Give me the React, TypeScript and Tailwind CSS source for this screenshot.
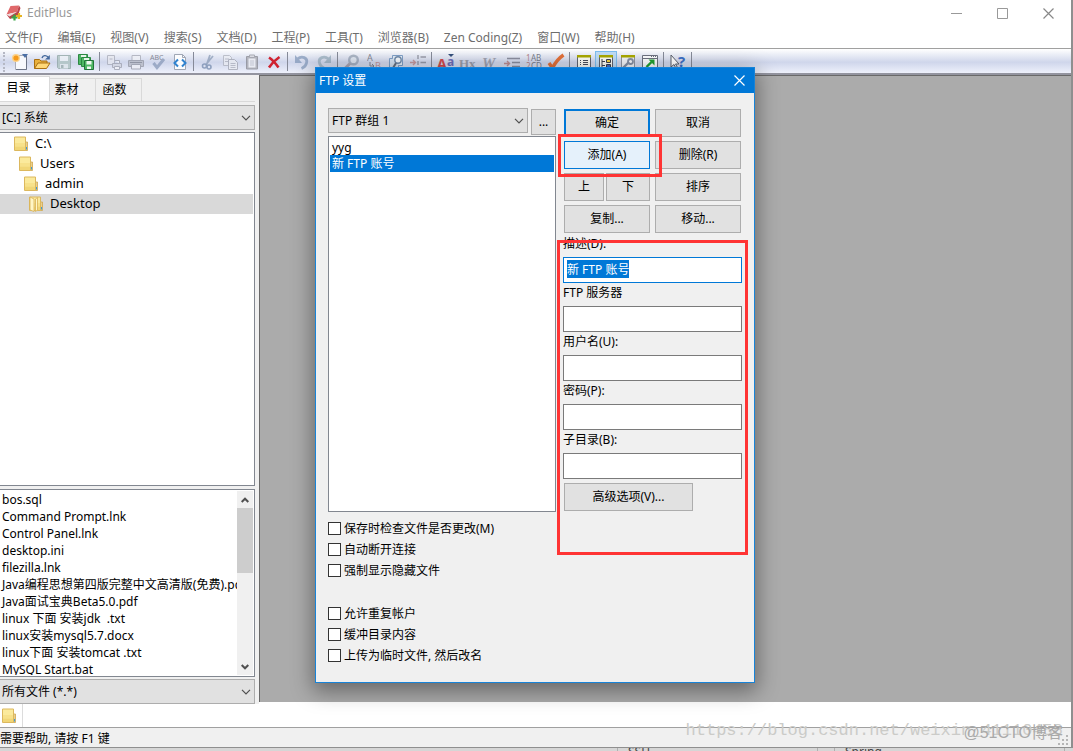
import { useEffect, useRef, useState } from 'react';
import type { ReactNode } from 'react';

const menus = [
  '文件(F)',
  '编辑(E)',
  '视图(V)',
  '搜索(S)',
  '文档(D)',
  '工程(P)',
  '工具(T)',
  '浏览器(B)',
  'Zen Coding(Z)',
  '窗口(W)',
  '帮助(H)',
];

type Tool = {
  name: string;
  icon: ReactNode;
  active?: boolean;
  dim?: boolean;
};

const toolGroups: Tool[][] = [
  [
    {
      name: '新建',
      icon: (
        <>
          <path d="M3.5 1.5h11v14h-11z" fill="#f7f8fc" stroke="#a9adb8" />
          <path d="M14.5 2v13.5H4" fill="none" stroke="#6d7486" />
          <path d="M10 0h6l-3 4z" fill="#4b6fa5" />
          <circle cx="4" cy="4" r="4" fill="#fbd28a" />
          <circle cx="4" cy="4" r="2.6" fill="#f59a1b" />
        </>
      ),
    },
    {
      name: '打开',
      icon: (
        <>
          <path d="M.5 14.500V5.500h5l1.500 1.500h6v3" fill="#e9b13d" stroke="#a96f12" />
          <path d="M.5 14.500 4 9h12l-3.500 5.500z" fill="#ffd877" stroke="#a96f12" />
          <path d="M8 4c1-3 4-3 6-1" fill="none" stroke="#44699c" strokeWidth="1.400" />
          <path d="M15.800 1v4.500H11z" fill="#44699c" />
        </>
      ),
    },
    {
      name: '保存',
      dim: true,
      icon: (
        <>
          <path d="M1.500 1.500h13v13h-12l-1-1z" fill="#a9c0bc" stroke="#869e9b" />
          <path d="M4 2h8v5H4z" fill="#eef2f6" />
          <path d="M4 10h8v4.500H4z" fill="#dfe7ea" />
          <path d="M5 11h2.500v3H5z" fill="#8fa3a3" />
        </>
      ),
    },
    {
      name: '全部保存',
      icon: (
        <>
          <path d="M.5.5h9v10h-9z" fill="#4fb864" stroke="#2c8843" />
          <path d="M3 1h5v3H3z" fill="#e6f5e9" />
          <path d="M3.500 3.500h9v9h-9z" fill="#4fb864" stroke="#2c8843" />
          <path d="M6 4h5v3H6z" fill="#e6f5e9" />
          <path d="M6.500 6.500h9v9h-9z" fill="#4fb864" stroke="#22753a" />
          <path d="M8.500 7h5v3.500h-5zM9 12.500h4V15H9z" fill="#f0f8f1" />
        </>
      ),
    },
  ],
  [
    {
      name: '打印预览',
      dim: true,
      icon: (
        <>
          <path d="M1.500 1.500h7v9h-7z" fill="#e8e9ef" stroke="#a3a6b3" />
          <path d="M3.500 5h3" stroke="#a3a6b3" />
          <path d="M6.500 9.500h9v4h-9z" fill="#d2d5df" stroke="#979aa8" />
          <path d="M8.500 6.500h5v3M8.500 12.500h5v3h-5z" fill="#f3f4f8" stroke="#979aa8" />
        </>
      ),
    },
    {
      name: '打印',
      dim: true,
      icon: (
        <>
          <path d="M4 1.500h8.500v5H4z" fill="#f1f2f6" stroke="#a0a3ae" />
          <path d="M.5 6.500h15v6H.5z" fill="#b3b6c0" stroke="#8d909c" />
          <path d="M2 8.500h12" stroke="#787c88" />
          <path d="M3.500 10.500h9v4.500h-9z" fill="#f1f2f6" stroke="#8d909c" />
        </>
      ),
    },
    {
      name: '拼写检查',
      dim: true,
      icon: (
        <>
          <text x="0" y="6" fontSize="7" fill="#5e626f">
            ABC
          </text>
          <path d="m3.500 9 3.500 4.500L14 5" fill="none" stroke="#8496b6" strokeWidth="3" />
        </>
      ),
    },
    {
      name: '在浏览器中查看',
      icon: (
        <>
          <path d="M2.500.5h8l3 3v12h-11z" fill="#fbfcfe" stroke="#9fa6b4" />
          <path d="M10.500.5v3h3" fill="none" stroke="#9fa6b4" />
          <path d="M6 5.500 2.500 9 6 12.500M10 5.500 13.500 9 10 12.500" fill="none" stroke="#2f82cf" strokeWidth="2" />
        </>
      ),
    },
  ],
  [
    {
      name: '剪切',
      dim: true,
      icon: (
        <>
          <path d="M10 1 6.500 11M13 2 6 10.500" stroke="#8698b3" strokeWidth="1.800" />
          <circle cx="4.500" cy="12" r="2" fill="none" stroke="#6f86aa" strokeWidth="1.600" />
          <circle cx="9" cy="13" r="2" fill="none" stroke="#6f86aa" strokeWidth="1.600" />
        </>
      ),
    },
    {
      name: '复制',
      dim: true,
      icon: (
        <>
          <path d="M1.500 1.500h6l2 2v8h-8z" fill="#eceef3" stroke="#abaeb9" />
          <path d="M6.500 5.500h6l3 3v7h-9z" fill="#eceef3" stroke="#9da0ac" />
          <path d="M3 5h4M3 7.500h3M8.500 9.500h5M8.500 11.500h5M8.500 13.500h5" stroke="#abaeb9" />
        </>
      ),
    },
    {
      name: '粘贴',
      dim: true,
      icon: (
        <>
          <path d="M2.500 2.500h11v12.500h-11z" fill="#a3a3a9" stroke="#7f8088" />
          <path d="M4.500 4.500h7v9h-7z" fill="#eff0f4" />
          <path d="M5.500 1h5v2.500h-5z" fill="#d5d6dc" stroke="#8f9098" />
          <path d="M6 7h4M6 9h4M6 11h4" stroke="#babcc5" />
        </>
      ),
    },
    {
      name: '删除',
      icon: <path d="M3 3.500c3 2 6 5 9.500 10M13.500 3C9 6 6 9 3 13.500" fill="none" stroke="#cf2230" strokeWidth="2.600" />,
    },
  ],
  [
    {
      name: '撤消',
      dim: true,
      icon: (
        <>
          <path d="M3.500 5C8 1 14 4 12.500 9c-.5 2.500-2.500 4.500-5 5.500" fill="none" stroke="#7f96b8" strokeWidth="2.800" />
          <path d="M1 1v8h7z" fill="#7f96b8" />
        </>
      ),
    },
    {
      name: '重做',
      dim: true,
      icon: (
        <>
          <path d="M12.500 5C8 1 2 4 3.500 9c.5 2.500 2.500 4.500 5 5.500" fill="none" stroke="#94abbb" strokeWidth="2.800" />
          <path d="M15 1v8H8z" fill="#94abbb" />
        </>
      ),
    },
  ],
  [
    {
      name: '查找',
      dim: true,
      icon: (
        <>
          <circle cx="9.500" cy="6" r="4.300" fill="#dfe7f0" stroke="#93a0b2" strokeWidth="2.400" />
          <path d="m6 9.500-5 5" stroke="#9a8f9b" strokeWidth="3" />
        </>
      ),
    },
    {
      name: '替换',
      dim: true,
      icon: (
        <>
          <text x="1" y="7" fontSize="9" fill="#5c5f6c">
            A
          </text>
          <path d="M4 8v4h4M6 10l2 2-2 2" fill="none" stroke="#5c5f6c" />
          <text x="9" y="15" fontSize="9" fill="#b57575">
            B
          </text>
        </>
      ),
    },
    {
      name: '在文件中查找',
      icon: (
        <>
          <path d="M1.500 4.500h9v10h-9z" fill="#d2e0f0" stroke="#7f9fc6" />
          <path d="M4.500 4V1.500h10v10H11" fill="#e4edf7" stroke="#7f9fc6" />
          <circle cx="10" cy="6" r="3.200" fill="#f4f8fc" stroke="#6f8aaa" strokeWidth="1.400" />
          <path d="m8 9-3 5" stroke="#66707f" strokeWidth="2" />
        </>
      ),
    },
    {
      name: '转到行',
      dim: true,
      icon: (
        <>
          <path d="M0 8.500h5M3 6l2.500 2.500L3 11" fill="none" stroke="#bb7c7c" strokeWidth="1.400" />
          <path d="M8 1v4M8 7v4M8 13v3M10.500 3H16M10.500 8.500H16M10.500 14H16" stroke="#7b7e8b" strokeWidth="1.400" />
        </>
      ),
    },
  ],
  [
    {
      name: '字体',
      icon: (
        <>
          <text x="-1" y="15" fontSize="14" fontWeight="bold" fill="#cf4b4f">
            A
          </text>
          <text x="9" y="12" fontSize="12" fontWeight="bold" fill="#6c6cb8">
            a
          </text>
          <path d="M10 0h6l-3 3z" fill="#34507c" />
        </>
      ),
    },
    {
      name: '十六进制查看器',
      dim: true,
      icon: (
        <text x="-1" y="14" fontSize="13" fontWeight="bold" fontFamily="Liberation Serif, serif" fill="#80838f">
          Hx
        </text>
      ),
    },
    {
      name: '自动换行',
      dim: true,
      icon: (
        <text
          x="0"
          y="14"
          fontSize="15"
          fontWeight="bold"
          fontStyle="italic"
          fontFamily="Liberation Serif, serif"
          fill="#858896"
        >
          W
        </text>
      ),
    },
    {
      name: '自动缩进',
      dim: true,
      icon: (
        <>
          <path d="M3 4.500h13M8 8.500h8M8 12.500h8" stroke="#696d7e" strokeWidth="1.400" />
          <path d="M0 9.500h5M3 7l2.500 2.500L3 12" fill="none" stroke="#b06a6a" strokeWidth="1.400" />
        </>
      ),
    },
    {
      name: '行号',
      dim: true,
      icon: (
        <>
          <text x="0" y="7" fontSize="8" fill="#a25c5c">
            1
          </text>
          <text x="5" y="7" fontSize="8" fill="#4f5362">
            AB
          </text>
          <text x="0" y="15" fontSize="8" fill="#a25c5c">
            2
          </text>
          <text x="5" y="15" fontSize="8" fill="#4f5362">
            CD
          </text>
        </>
      ),
    },
    {
      name: '语法检查',
      icon: <path d="m1 9 3.500 5C7 9 11 4 15.500 1" fill="none" stroke="#e2703a" strokeWidth="3.400" />,
    },
  ],
  [
    {
      name: '剪辑窗口',
      icon: (
        <>
          <path d="M1.500 1.500h13v13h-13z" fill="#fbfbf4" stroke="#5f6472" />
          <path d="M1 1h14v2.500H1z" fill="#a9a800" />
          <path d="M4 6.500h1M4 8.500h1M4 10.500h1M7 6.500h5M7 8.500h5M7 10.500h5" stroke="#4a4f5c" />
        </>
      ),
    },
    {
      name: '目录窗口',
      active: true,
      icon: (
        <>
          <path d="M1.500 1.500h13v13h-13z" fill="#fbfbf4" stroke="#5f6472" />
          <path d="M1 1h14v2.500H1z" fill="#a9a800" />
          <path d="M4 5v8M4 7.500h3M4 11.500h3" fill="none" stroke="#3c414d" />
          <path d="M8.500 5.500h4v3h-4z" fill="#f1d13e" stroke="#3c414d" />
          <path d="M8.500 10.500h4v3h-4z" fill="#3f6ec6" stroke="#3c414d" />
        </>
      ),
    },
    {
      name: '输出窗口',
      icon: (
        <>
          <path d="M1.500 1.500h13v13h-13z" fill="#f1f3f8" stroke="#8f94a2" />
          <path d="M1 1h14v2.500H1z" fill="#a9a800" />
          <path d="m3 14 6-6" stroke="#8690a5" strokeWidth="2.400" />
          <circle cx="10.500" cy="7.500" r="2.500" fill="none" stroke="#8690a5" strokeWidth="1.800" />
        </>
      ),
    },
    {
      name: '新窗口',
      icon: (
        <>
          <path d="M.5 1.500h15v13H.5z" fill="#fbfcfe" stroke="#6d7280" />
          <path d="M1 4.500h14M9 2.500h1M11 2.500h1M13 2.500h1" stroke="#6d7280" />
          <path d="m4.500 13 5-5" stroke="#22a032" strokeWidth="2.400" />
          <path d="M6.500 5.500h6v6z" fill="#22a032" />
        </>
      ),
    },
  ],
  [
    {
      name: '上下文帮助',
      icon: (
        <>
          <path d="M1 1v12l3-2.500 2 4 1.500-1-2-3.500H9z" fill="#fff" stroke="#5b606d" />
          <text x="8" y="13" fontSize="15" fontWeight="bold" fill="#3d6fc4">
            ?
          </text>
        </>
      ),
    },
  ],
];

const folders = [
  { name: 'C:\\', indent: 'pl-[14px]' },
  { name: 'Users', indent: 'pl-[19px]' },
  { name: 'admin', indent: 'pl-[24px]' },
  { name: 'Desktop', indent: 'pl-[29px]' },
];

const files = [
  'bos.sql',
  'Command Prompt.lnk',
  'Control Panel.lnk',
  'desktop.ini',
  'filezilla.lnk',
  'Java编程思想第四版完整中文高清版(免费).pdf',
  'Java面试宝典Beta5.0.pdf',
  'linux 下面 安装jdk  .txt',
  'linux安装mysql5.7.docx',
  'linux下面 安装tomcat .txt',
  'MySQL Start.bat',
];

const saveOptions = ['保存时检查文件是否更改(M)', '自动断开连接', '强制显示隐藏文件'];
const cacheOptions = ['允许重复帐户', '缓冲目录内容', '上传为临时文件, 然后改名'];

function Chevron() {
  return (
    <svg viewBox="0 0 10 6" className="h-[6px] w-[10px]" aria-hidden>
      <path d="m1 .8 4 4 4-4" fill="none" stroke="#505050" strokeWidth="1.200" />
    </svg>
  );
}

function ScrollArrow({ up = false }: { up?: boolean }) {
  return (
    <svg viewBox="0 0 8 6" className={up ? 'h-[6px] w-2' : 'h-[6px] w-2 rotate-180'} aria-hidden>
      <path d="m.7 5 3.300-3.300L7.300 5" fill="none" stroke="#505050" strokeWidth="2" />
    </svg>
  );
}

function FolderIcon({ open = false }: { open?: boolean }) {
  return (
    <svg viewBox="0 0 16 16" className="h-4 w-4 shrink-0" aria-hidden>
      <path d="M10.500 6h3v8.500h-3z" fill="#ecd08a" stroke="#cda654" strokeWidth=".8" />
      <path d="M.5 1h11v13.500H.5z" fill="#fbea9c" stroke="#dcb85e" />
      <path d="M1 7h10v3.500H1z" fill="#f7e18a" />
      <path d="M1 10.500h10V14H1z" fill="#f1d676" />
      <path d="M12.500 11v2.500" stroke="#3d9bd8" />
      {open && <path d="m1 1 4 2v12.500l-4-1.500zM6.500 3l2-1.500V14l-2 1.500z" fill="#fff6c6" stroke="#d9b355" strokeWidth=".8" />}
    </svg>
  );
}

function AppIcon() {
  return (
    <svg viewBox="0 0 16 16" className="h-4 w-4" aria-hidden>
      <path d="M4.500 1 13 .5 11 7 .5 9.500z" fill="#e0686a" />
      <path d="M.5 9.500 11 7v2.500L3 12.500z" fill="#f0dcdc" />
      <path d="M13 .5 14.500 3 12 10.500 4 14 .5 9.500l3 2L11 7z" fill="#b9434a" />
      <path d="M8.500 9.500v6M5.500 12.500h6" stroke="#3aa648" strokeWidth="2.200" />
      <path d="M13 8v6M10 11h6" stroke="#e6b422" strokeWidth="2.200" />
    </svg>
  );
}

type ComboProps = {
  label: string;
  value: string;
  flush?: boolean;
};

function Combo({ label, value, flush = false }: ComboProps) {
  return (
    <div className="relative h-[25px]">
      <select
        aria-label={label}
        className={
          flush
            ? 'h-full w-full appearance-none border border-l-0 border-[#adadad] bg-[#e1e1e1] pl-[2px] pr-6 text-xs outline-none'
            : 'h-full w-full appearance-none border border-[#adadad] bg-[#e1e1e1] pl-[3px] pr-6 text-xs outline-none'
        }
      >
        <option>{value}</option>
      </select>
      <span className="pointer-events-none absolute inset-y-0 right-1 flex items-center">
        <Chevron />
      </span>
    </div>
  );
}

type DialogButtonProps = {
  children: ReactNode;
  className?: string;
};

function DialogButton({ children, className = 'border border-[#adadad] bg-[#e1e1e1]' }: DialogButtonProps) {
  return (
    <button type="button" className={`h-7 w-full text-xs ${className}`}>
      {children}
    </button>
  );
}

function Field({ id, label, children }: { id: string; label: string; children?: ReactNode }) {
  return (
    <div>
      <label htmlFor={id} className="mb-[3px] block h-5 leading-5">
        {label}
      </label>
      {children ?? <input id={id} className="block h-[26px] w-full border border-[#7a7a7a] bg-white px-[3px] outline-none" />}
    </div>
  );
}

function CheckRow({ label }: { label: string }) {
  return (
    <label className="flex h-[21px] items-center gap-[3px]">
      <input type="checkbox" className="h-[13px] w-[13px] shrink-0 appearance-none border border-[#333] bg-white checked:bg-[#0078d7]" />
      {label}
    </label>
  );
}

function TitleBar() {
  return (
    <header className="flex h-[26px] items-center bg-white pl-1.5 text-[#999]">
      <AppIcon />
      <h1 className="ml-[5px] flex-1 text-xs">EditPlus</h1>
      <button type="button" aria-label="最小化" className="flex h-full w-[46px] items-center justify-center">
        <svg viewBox="0 0 11 11" className="h-[11px] w-[11px]" aria-hidden>
          <path d="M0 5.500h11" stroke="#999" />
        </svg>
      </button>
      <button type="button" aria-label="最大化" className="flex h-full w-[46px] items-center justify-center">
        <svg viewBox="0 0 11 11" className="h-[11px] w-[11px]" aria-hidden>
          <path d="M.5.5h10v10H.5z" fill="none" stroke="#999" />
        </svg>
      </button>
      <button type="button" aria-label="关闭" className="flex h-full w-[46px] items-center justify-center">
        <svg viewBox="0 0 11 11" className="h-[11px] w-[11px]" aria-hidden>
          <path d="m.5.5 10 10m0-10-10 10" stroke="#888" strokeWidth="1.200" />
        </svg>
      </button>
    </header>
  );
}

function MenuBar() {
  return (
    <nav className="flex h-[23px] items-center gap-[15px] border-b border-[#a0a0a0] bg-white pl-[5px] pt-[2px] text-[#6d6d6d]">
      {menus.map((menu) => (
        <button key={menu} type="button" className="whitespace-nowrap">
          {menu}
        </button>
      ))}
    </nav>
  );
}

function ToolBar() {
  return (
    <div
      role="toolbar"
      className="flex h-[26px] items-center border-b-2 border-[#93949f] bg-gradient-to-b from-white via-[#cfd6eb] via-55% to-[#eef1fb] pl-[3px] pt-px"
    >
      <span className="mr-1 h-5 border-l-2 border-dotted border-[#b5b8c4]" />
      {toolGroups.map((group, i) => (
        <div key={i} className="flex h-full items-center">
          {group.map((tool) => (
            <button
              key={tool.name}
              type="button"
              aria-label={tool.name}
              className={
                tool.active
                  ? 'flex h-[22px] w-[22px] items-center justify-center border border-[#7ebef0] bg-[#bfdcf5]'
                  : 'flex h-[22px] w-[22px] items-center justify-center'
              }
            >
              <svg
                viewBox="0 0 16 16"
                className={tool.dim ? 'h-4 w-4 overflow-visible opacity-70' : 'h-4 w-4 overflow-visible'}
                aria-hidden
              >
                {tool.icon}
              </svg>
            </button>
          ))}
          <span className="ml-[2px] mr-[3px] h-[19px] w-px bg-[#858a98]" />
        </div>
      ))}
    </div>
  );
}

function SidePanel() {
  return (
    <aside className="flex w-[259px] shrink-0 flex-col bg-[#f0f0f0] pr-1">
      <div role="tablist" className="flex h-[27px] items-end border-b border-[#d9d9d9]">
        <button type="button" role="tab" aria-selected="true" className="h-[25px] w-[50px] border-r border-t border-[#d9d9d9] bg-white pb-0.5 pr-3">
          目录
        </button>
        <button type="button" role="tab" aria-selected="false" className="h-[23px] w-[46px] border-r border-t border-[#d9d9d9] pr-3">
          素材
        </button>
        <button type="button" role="tab" aria-selected="false" className="h-[23px] w-[46px] border-r border-t border-[#d9d9d9] pr-2">
          函数
        </button>
      </div>
      <div className="mt-[3px]">
        <Combo label="驱动器" value="[C:] 系统" flush />
      </div>
      <ul className="mt-[2px] min-h-0 flex-1 border border-l-0 border-[#828790] bg-white pr-px pt-px text-[13px]">
        {folders.map((folder, i) => {
          const open = i === folders.length - 1;
          return (
            <li key={folder.name} className={open ? 'bg-[#d9d9d9]' : ''}>
              <button type="button" className={`flex h-5 w-full items-center gap-[5px] ${folder.indent}`}>
                <FolderIcon open={open} />
                {folder.name}
              </button>
            </li>
          );
        })}
      </ul>
      <div className="mt-[3px] flex h-[188px] border border-l-0 border-[#828790] bg-white py-px pr-px">
        <ul className="min-w-0 flex-1 overflow-hidden pl-[2px]">
          {files.map((file) => (
            <li key={file} className="h-[17px] whitespace-pre leading-[17px]">
              {file}
            </li>
          ))}
        </ul>
        <div className="flex w-4 shrink-0 flex-col items-center bg-[#f0f0f0]">
          <button type="button" aria-label="向上滚动" className="flex h-[17px] w-full items-center justify-center">
            <ScrollArrow up />
          </button>
          <div className="h-[65px] w-full bg-[#cdcdcd]" />
          <button type="button" aria-label="向下滚动" className="mt-auto flex h-[17px] w-full items-center justify-center">
            <ScrollArrow />
          </button>
        </div>
      </div>
      <div className="mt-[2px]">
        <Combo label="文件类型" value="所有文件 (*.*)" flush />
      </div>
    </aside>
  );
}

function FtpDialog() {
  const [description, setDescription] = useState('新 FTP 账号');
  const descriptionRef = useRef<HTMLInputElement>(null);

  useEffect(() => {
    descriptionRef.current?.focus();
    descriptionRef.current?.select();
  }, []);

  return (
    <section
      role="dialog"
      aria-labelledby="ftp-title"
      className="absolute left-[315px] top-[67px] w-[440px] border border-[#1883d7] bg-[#f0f0f0] shadow-[0_6px_20px_2px_rgba(0,0,0,0.4)]"
    >
      <div className="flex h-[25px] items-center bg-[#0078d7] pl-[3px] text-white">
        <h2 id="ftp-title" className="flex-1">
          FTP 设置
        </h2>
        <button type="button" aria-label="关闭" className="flex h-full w-[30px] items-center justify-center">
          <svg viewBox="0 0 11 11" className="h-[11px] w-[11px]" aria-hidden>
            <path d="m.5.5 10 10m0-10-10 10" stroke="#fff" strokeWidth="1.200" />
          </svg>
        </button>
      </div>

      <div className="flex gap-[7px] pb-4 pl-3 pr-3 pt-[15px]">
        <div className="flex w-[228px] flex-col">
          <div className="flex gap-[3px]">
            <div className="w-[200px]">
              <Combo label="FTP 群组" value="FTP 群组 1" />
            </div>
            <button type="button" aria-label="编辑群组" className="mt-px h-[26px] flex-1 border border-[#adadad] bg-[#e1e1e1]">
              ...
            </button>
          </div>
          <ul role="listbox" aria-label="FTP 账号" className="mt-px h-[376px] border border-[#828790] bg-white p-px">
            <li role="option" aria-selected="false" className="h-[17px] pl-[2px] leading-[19px]">
              yyg
            </li>
            <li role="option" aria-selected="true" className="h-[17px] bg-[#0078d7] pl-[2px] leading-[17px] text-white">
              新 FTP 账号
            </li>
          </ul>
          <div className="mt-[6px]">
            {saveOptions.map((label) => (
              <CheckRow key={label} label={label} />
            ))}
          </div>
          <div className="mt-[22px]">
            {cacheOptions.map((label) => (
              <CheckRow key={label} label={label} />
            ))}
          </div>
        </div>

        <div className="flex-1 pt-px">
          <div className="grid grid-cols-2 gap-x-[5px] gap-y-1 px-px">
            <DialogButton className="border-2 border-[#0078d7] bg-[#e1e1e1]">确定</DialogButton>
            <DialogButton>取消</DialogButton>
            <div className="relative">
              <DialogButton className="border border-[#0078d7] bg-[#e5f1fb]">添加(A)</DialogButton>
              <span className="pointer-events-none absolute -bottom-2 -left-1.5 -right-3 -top-[7px] border-[3px] border-[#ff3434]" />
            </div>
            <DialogButton>删除(R)</DialogButton>
            <div className="grid grid-cols-[40px_1fr] gap-[2px]">
              <DialogButton>上</DialogButton>
              <DialogButton>下</DialogButton>
            </div>
            <DialogButton>排序</DialogButton>
            <DialogButton>复制...</DialogButton>
            <DialogButton>移动...</DialogButton>
          </div>

          <form className="relative mt-px flex flex-col" onSubmit={(e) => e.preventDefault()}>
            <Field id="ftp-description" label="描述(D):">
              <input
                id="ftp-description"
                ref={descriptionRef}
                value={description}
                onChange={(e) => setDescription(e.target.value)}
                className="block h-[26px] w-full border border-[#0078d7] bg-white px-[3px] pb-[2px] outline-none selection:bg-[#0078d7] selection:text-white"
              />
            </Field>
            <Field id="ftp-server" label="FTP 服务器" />
            <Field id="ftp-user" label="用户名(U):" />
            <Field id="ftp-password" label="密码(P):" />
            <Field id="ftp-subdir" label="子目录(B):" />
            <div className="ml-px mt-1 w-[129px]">
              <DialogButton>高级选项(V)...</DialogButton>
            </div>
            <span className="pointer-events-none absolute -bottom-11 -left-1.5 -right-1.5 top-1.5 border-[3px] border-[#ff3434]" />
          </form>
        </div>
      </div>
    </section>
  );
}

export default function App() {
  return (
    <div className="relative flex h-screen w-full flex-col overflow-hidden bg-[#d6d6d6] font-['Noto_Sans','Noto_Sans_CJK_SC',sans-serif] text-xs text-black">
      <div className="flex min-h-0 flex-1 flex-col border-b border-r-2 border-[#8f8f8f] bg-white">
        <TitleBar />
        <MenuBar />
        <ToolBar />
        <main className="flex min-h-0 flex-1">
          <SidePanel />
          <div className="mb-[2px] flex-1 border-l border-t border-[#696969] bg-[#ababab]" />
        </main>
        <div className="flex h-[23px] bg-white">
          <button type="button" aria-label="Desktop" className="flex w-[23px] items-center border-r border-[#dcdcdc] pl-[2px]">
            <FolderIcon />
          </button>
        </div>
        <footer className="flex h-5 items-center border-t border-[#a0a0a0] bg-[#f0f0f0] pt-0.5">
          <p className="flex-1">需要帮助, 请按 F1 键</p>
          <svg viewBox="0 0 11 11" className="mr-[2px] mt-1 h-[11px] w-[11px]" aria-hidden>
            <path d="M8 0h2v2H8zM4 4h2v2H4zM8 4h2v2H8zM0 8h2v2H0zM4 8h2v2H4zM8 8h2v2H8z" fill="#b5b5b5" />
          </svg>
        </footer>
      </div>

      {/* top edge of the window behind */}
      <div className="flex h-[3px] shrink-0 justify-end gap-4 overflow-hidden pr-2 leading-[8px] text-[#444]">
        <span className="w-[201px] border-x border-[#b0b0b0] pl-2.5">SSH</span>
        <span className="w-[231px] border-x border-[#b0b0b0] pl-2.5">Spring</span>
      </div>

      <FtpDialog />

      <p className="pointer-events-none absolute bottom-2 right-2.5 font-['Liberation_Mono',monospace] text-[17px] leading-6 text-[#cbcbc8]">
        https://blog.csdn.net/weixin_41110458
      </p>
      <p className="pointer-events-none absolute bottom-1.5 right-2.5 font-['Liberation_Sans','Noto_Sans_CJK_SC',sans-serif] text-base text-[#a9a9a9]">
        @51CTO博客
      </p>
    </div>
  );
}
